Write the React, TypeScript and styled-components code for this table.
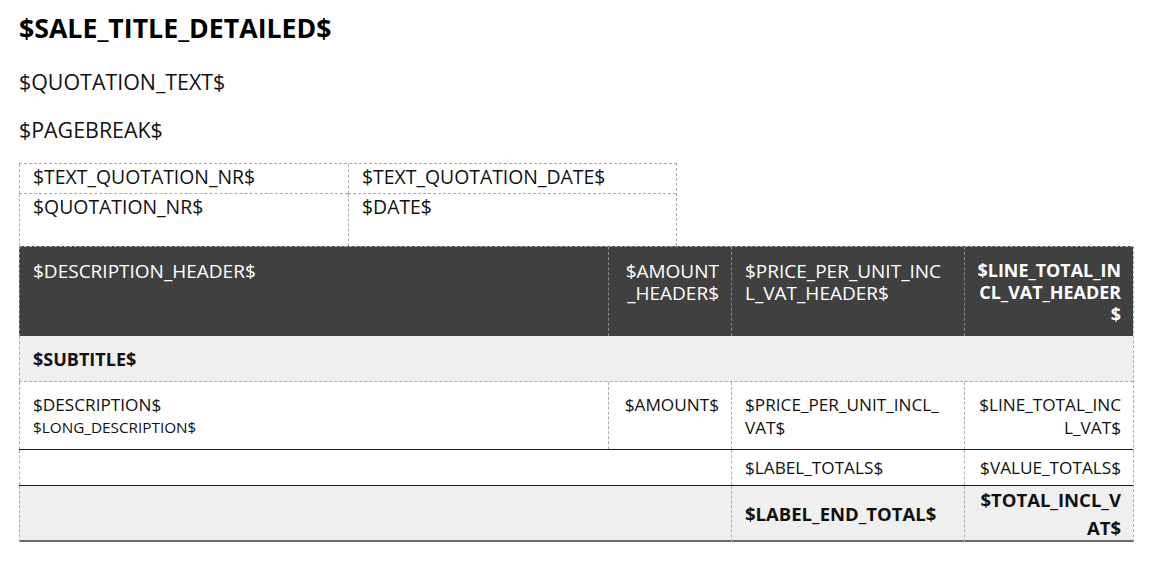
import React from 'react';
import styled, { createGlobalStyle } from 'styled-components';

const GlobalStyle = createGlobalStyle`
  html, body {
    margin: 0;
    padding: 0;
    background: #ffffff;
  }
  body {
    font-family: "Open Sans", "Noto Sans", Arial, sans-serif;
    color: #111111;
  }
`;

const DASH = '#ababab';
const DARK = '#404040';
const LIGHT = '#efefef';
const COLS = '589px 123px 233px 169px';

const Page = styled.div`
  display: flex;
  flex-direction: column;
  align-items: flex-start;
  padding: 11px 0 20px 19px;
  width: 1168px;
  box-sizing: border-box;
`;

const Title = styled.h1`
  margin: 0;
  font-size: 26.7px;
  line-height: 34px;
  font-weight: 700;
  color: #000;
`;

const Para = styled.p<{ $gap: number }>`
  margin: ${(p) => p.$gap}px 0 0 0;
  font-size: 21.4px;
  line-height: 24px;
  color: #111;
`;

const InfoTable = styled.div`
  margin-top: 21px;
  display: grid;
  grid-template-columns: 329px 328px;
  border-top: 1px dashed ${DASH};
  border-right: 1px dashed ${DASH};
  box-sizing: border-box;
`;

const InfoCell = styled.div<{ $h: number; $last?: boolean }>`
  height: ${(p) => p.$h}px;
  box-sizing: border-box;
  border-left: 1px dashed ${DASH};
  border-bottom: ${(p) => (p.$last ? 'none' : `1px dashed ${DASH}`)};
  padding: 1px 12px 0 13px;
  font-size: 19.4px;
  line-height: 24px;
  white-space: nowrap;
`;

const MainTable = styled.div`
  display: flex;
  flex-direction: column;
  border-right: 1px dashed ${DASH};
`;

const Row = styled.div<{ $h: number; $bg?: string; $bottom?: string }>`
  display: grid;
  grid-template-columns: ${COLS};
  height: ${(p) => p.$h}px;
  box-sizing: content-box;
  background: ${(p) => p.$bg ?? 'transparent'};
  border-bottom: ${(p) => p.$bottom ?? 'none'};
`;

const HeaderRow = styled(Row)`
  border-top: 1px dashed ${DASH};
`;

const Cell = styled.div<{
  $span?: number;
  $right?: boolean;
  $bold?: boolean;
  $size: number;
  $lh: number;
  $pt: number;
  $line?: string;
  $color?: string;
  $center?: boolean;
}>`
  grid-column: span ${(p) => p.$span ?? 1};
  box-sizing: border-box;
  border-left: 1px dashed ${(p) => p.$line ?? DASH};
  padding: ${(p) => p.$pt}px 12px 0 13px;
  font-size: ${(p) => p.$size}px;
  line-height: ${(p) => p.$lh}px;
  font-weight: ${(p) => (p.$bold ? 700 : 400)};
  text-align: ${(p) => (p.$right ? 'right' : 'left')};
  color: ${(p) => p.$color ?? '#111'};
  white-space: nowrap;
  display: flex;
  flex-direction: column;
  align-items: ${(p) => (p.$right ? 'flex-end' : 'flex-start')};
  justify-content: ${(p) => (p.$center ? 'center' : 'flex-start')};
`;

const Small = styled.span`
  font-size: 15.3px;
  line-height: 23px;
`;

export default function App() {
  const hdr = { $size: 19, $lh: 22, $pt: 13, $line: '#8a8a8a', $color: '#ffffff' };
  return (
    <>
      <GlobalStyle />
      <Page>
        <Title>$SALE_TITLE_DETAILED$</Title>
        <Para $gap={25}>$QUOTATION_TEXT$</Para>
        <Para $gap={24}>$PAGEBREAK$</Para>

        <InfoTable>
          <InfoCell $h={30}>$TEXT_QUOTATION_NR$</InfoCell>
          <InfoCell $h={30}>$TEXT_QUOTATION_DATE$</InfoCell>
          <InfoCell $h={52} $last>$QUOTATION_NR$</InfoCell>
          <InfoCell $h={52} $last>$DATE$</InfoCell>
        </InfoTable>

        <MainTable>
          <HeaderRow $h={89} $bg={DARK}>
            <Cell {...hdr}>$DESCRIPTION_HEADER$</Cell>
            <Cell {...hdr} $right>
              <span>
                $AMOUNT
                <br />
                _HEADER$
              </span>
            </Cell>
            <Cell {...hdr}>
              <span>
                $PRICE_PER_UNIT_INC
                <br />
                L_VAT_HEADER$
              </span>
            </Cell>
            <Cell {...hdr} $size={17.9} $pt={12} $right $bold>
              <span>
                $LINE_TOTAL_IN
                <br />
                CL_VAT_HEADER
                <br />$
              </span>
            </Cell>
          </HeaderRow>

          <Row $h={45} $bg={LIGHT} $bottom={`1px dashed ${DASH}`}>
            <Cell $span={4} $size={18} $lh={24} $pt={11} $bold>
              $SUBTITLE$
            </Cell>
          </Row>

          <Row $h={67} $bottom="1.5px solid #1a1a1a">
            <Cell $size={17.2} $lh={23} $pt={11}>
              <span>$DESCRIPTION$</span>
              <Small>$LONG_DESCRIPTION$</Small>
            </Cell>
            <Cell $size={17.2} $lh={23} $pt={11} $right>
              $AMOUNT$
            </Cell>
            <Cell $size={17.2} $lh={23} $pt={11}>
              <span>
                $PRICE_PER_UNIT_INCL_
                <br />
                VAT$
              </span>
            </Cell>
            <Cell $size={17.2} $lh={23} $pt={11} $right>
              <span>
                $LINE_TOTAL_INC
                <br />
                L_VAT$
              </span>
            </Cell>
          </Row>

          <Row $h={35} $bottom="1.5px solid #1a1a1a">
            <Cell $span={2} $size={17.2} $lh={23} $pt={6} />
            <Cell $size={17.2} $lh={23} $pt={6}>
              $LABEL_TOTALS$
            </Cell>
            <Cell $size={17.2} $lh={23} $pt={6} $right>
              $VALUE_TOTALS$
            </Cell>
          </Row>

          <Row $h={54} $bg={LIGHT} $bottom="2px solid #6a6a6a">
            <Cell $span={2} $size={18.5} $lh={28} $pt={0} />
            <Cell $size={18.5} $lh={28} $pt={0} $bold $center>
              $LABEL_END_TOTAL$
            </Cell>
            <Cell $size={18.5} $lh={28} $pt={0} $right $bold>
              <span>
                $TOTAL_INCL_V
                <br />
                AT$
              </span>
            </Cell>
          </Row>
        </MainTable>
      </Page>
    </>
  );
}
